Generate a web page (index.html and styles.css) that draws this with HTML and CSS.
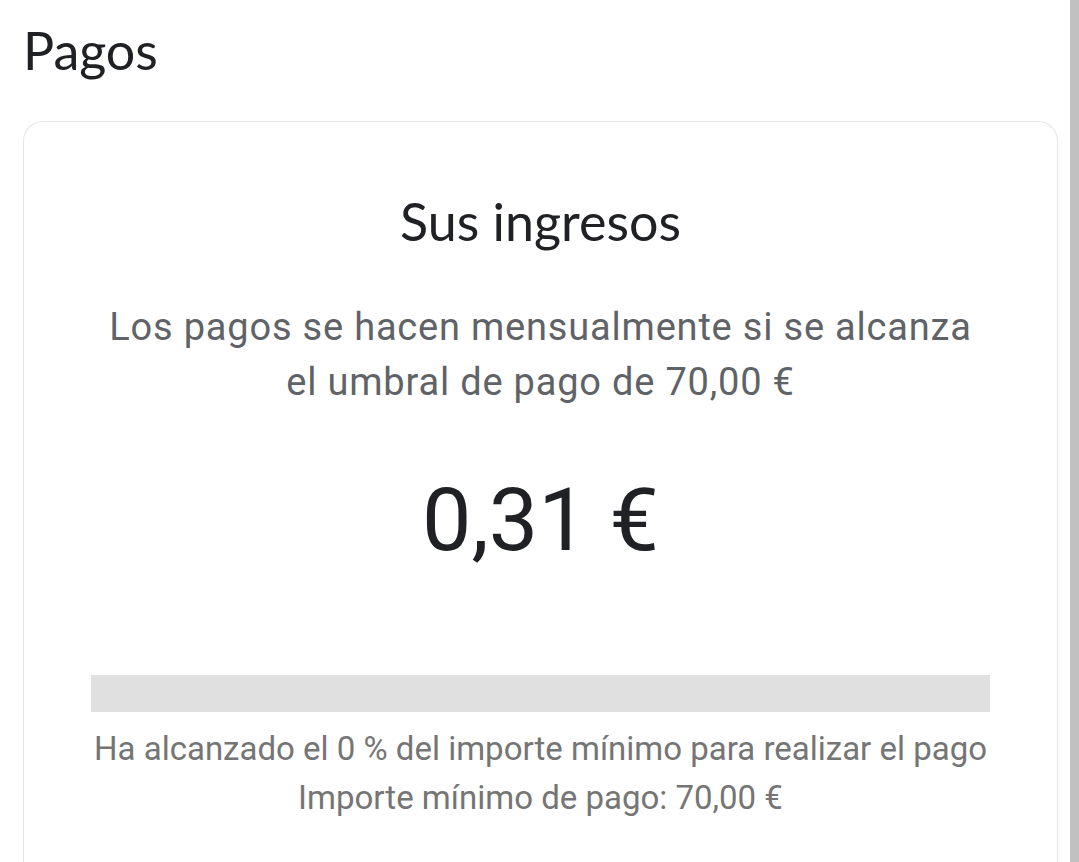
FILE: index.html
```html
<!DOCTYPE html>
<html lang="es">
<head>
    <meta charset="UTF-8">
    <meta name="viewport" content="width=device-width, initial-scale=1.0">
    <title>Pagos</title>
    <link rel="stylesheet" href="styles.css">
</head>
<body>
    <div class="page">
        <main class="content">
            <h1 class="page-title">Pagos</h1>
            <section class="card">
                <h2 class="card-title">Sus ingresos</h2>
                <p class="card-text">Los pagos se hacen mensualmente si se alcanza<br>el umbral de pago de 70,00 €</p>
                <div class="amount">0,31 €</div>
                <div class="progress">
                    <div class="progress-fill" style="width: 0%"></div>
                </div>
                <p class="progress-note">Ha alcanzado el 0 % del importe mínimo para realizar el pago<br>Importe mínimo de pago: 70,00 €</p>
            </section>
        </main>
        <div class="scrollbar"></div>
    </div>
</body>
</html>
```

FILE: styles.css
```css
html, body {
    margin: 0;
    height: 100%;
    overflow: hidden;
}

body {
    background: #ffffff;
    font-family: Roboto, "Liberation Sans", sans-serif;
    color: #202124;
}

.page {
    display: flex;
    height: 100%;
}

.content {
    flex: 1;
    padding: 0 12px 0 23px;
}

.scrollbar {
    width: 9px;
    background-color: #c1c1c1;
}

.page-title {
    margin: 0;
    padding-top: 20px;
    height: 121px;
    box-sizing: border-box;
    font-family: Lato, "Open Sans", sans-serif;
    font-weight: 400;
    font-size: 52px;
    line-height: 60px;
    color: #202124;
}

.card {
    border: 1px solid #e4e6e8;
    border-bottom: none;
    border-radius: 20px 20px 0 0;
    padding: 69px 40px 40px;
    text-align: center;
    min-height: 800px;
}

.card-title {
    margin: 0;
    font-family: Lato, "Open Sans", sans-serif;
    font-weight: 400;
    font-size: 52px;
    line-height: 60px;
    color: #202124;
}

.card-text {
    margin: 49px 0 0;
    font-size: 38px;
    line-height: 55px;
    letter-spacing: 0.8px;
    color: #5f6368;
}

.amount {
    margin-top: 55px;
    font-size: 88px;
    line-height: 110px;
    color: #202124;
}

.progress {
    margin: 100px 27px 0;
    height: 37px;
    background-color: #e0e0e0;
}

.progress-fill {
    height: 100%;
    background-color: #1a73e8;
}

.progress-note {
    margin: 12px 0 0;
    font-size: 33px;
    line-height: 49px;
    color: #757575;
}
```
